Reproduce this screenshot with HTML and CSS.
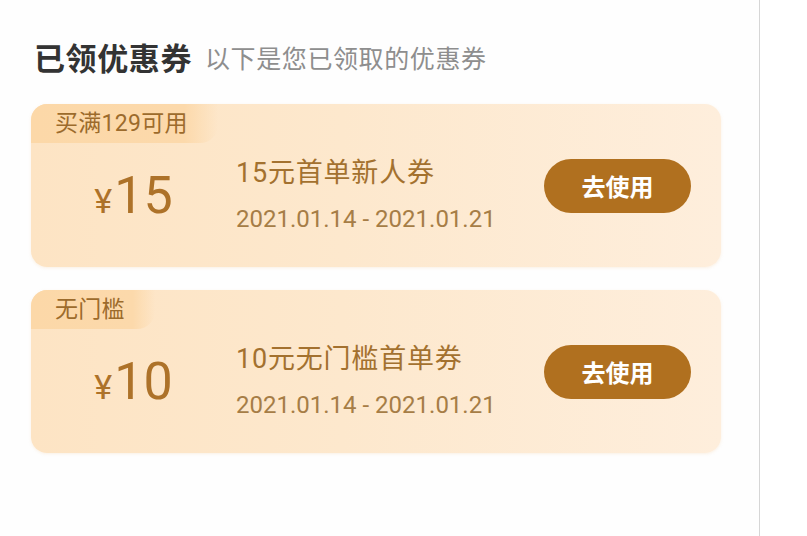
FILE: index.html
```html
<!DOCTYPE html>
<html lang="zh">
<head>
<meta charset="utf-8">
<title>已领优惠券</title>
<link rel="stylesheet" href="styles.css">
</head>
<body>
<div class="page">
  <header class="head">
    <h1 class="title">已领优惠券</h1>
    <span class="sub">以下是您已领取的优惠券</span>
  </header>
  <div class="list">
    <div class="coupon">
      <div class="badge">买满129可用</div>
      <div class="amount"><span class="yen">¥</span><span class="num">15</span></div>
      <div class="info">
        <div class="name">15元首单新人券</div>
        <div class="date">2021.01.14 - 2021.01.21</div>
      </div>
      <button class="use">去使用</button>
    </div>
    <div class="coupon">
      <div class="badge">无门槛</div>
      <div class="amount"><span class="yen">¥</span><span class="num">10</span></div>
      <div class="info">
        <div class="name">10元无门槛首单券</div>
        <div class="date">2021.01.14 - 2021.01.21</div>
      </div>
      <button class="use">去使用</button>
    </div>
  </div>
</div>
</body>
</html>
```
FILE: styles.css
```css
* { box-sizing: border-box; }
html, body { margin: 0; padding: 0; background: #fff; }
body {
  font-family: Roboto, "Noto Sans CJK SC", "Noto Sans", sans-serif;
  width: 807px;
  height: 536px;
  overflow: hidden;
}
.page {
  width: 760px;
  height: 536px;
  border-right: 1px solid #d6d6d6;
  padding: 39px 38px 0 31px;
  background: #fefefe;
}
.head {
  display: flex;
  align-items: center;
  height: 36px;
  padding-left: 3px;
}
.title {
  margin: 0;
  font-size: 31px;
  letter-spacing: 0.6px;
  font-weight: 700;
  color: #333;
  line-height: 36px;
  font-family: "Noto Sans CJK SC", sans-serif;
}
.sub {
  margin-left: 13px;
  font-size: 25px;
  letter-spacing: 0.6px;
  color: #8e8e8e;
  line-height: 36px;
  font-family: "Noto Sans CJK SC", sans-serif;
}
.list {
  margin-top: 29px;
  display: flex;
  flex-direction: column;
  gap: 23px;
}
.coupon {
  position: relative;
  height: 163px;
  border-radius: 16px;
  background: linear-gradient(90deg, #fde4c4 0%, #fde8cd 45%, #feeedc 100%);
  box-shadow: 0 1px 3px rgba(240, 200, 150, 0.25);
  display: flex;
  align-items: center;
  padding: 20px 30px 0 0;
}
.badge {
  position: absolute;
  left: 0;
  top: 0;
  height: 39px;
  padding: 0 30px 0 24px;
  line-height: 39px;
  font-size: 23px;
  letter-spacing: 0.3px;
  color: #9c6b2c;
  border-top-left-radius: 16px;
  border-bottom-right-radius: 18px;
  background: linear-gradient(90deg, #fcd8a8 0%, #fcd9ab 82%, rgba(252, 217, 171, 0) 100%);
}
.amount {
  width: 205px;
  flex: none;
  text-align: center;
  color: #ad7229;
  white-space: nowrap;
}
.yen {
  font-size: 34px;
  margin-right: 2px;
}
.num {
  font-size: 52px;
  line-height: 60px;
}
.info {
  flex: 1;
  color: #a3712f;
}
.name {
  font-size: 27px;
  letter-spacing: 0.8px;
  line-height: 34px;
  font-family: Roboto, "Noto Sans CJK SC", sans-serif;
}
.date {
  margin-top: 12px;
  font-size: 24px;
  line-height: 34px;
  color: #a67d46;
}
.use {
  flex: none;
  width: 147px;
  height: 54px;
  margin-bottom: 20px;
  border: none;
  border-radius: 27px;
  background: #b0701f;
  color: #fff;
  font-size: 24px;
  font-weight: 700;
  font-family: "Noto Sans CJK SC", sans-serif;
  padding: 0;
}
```
